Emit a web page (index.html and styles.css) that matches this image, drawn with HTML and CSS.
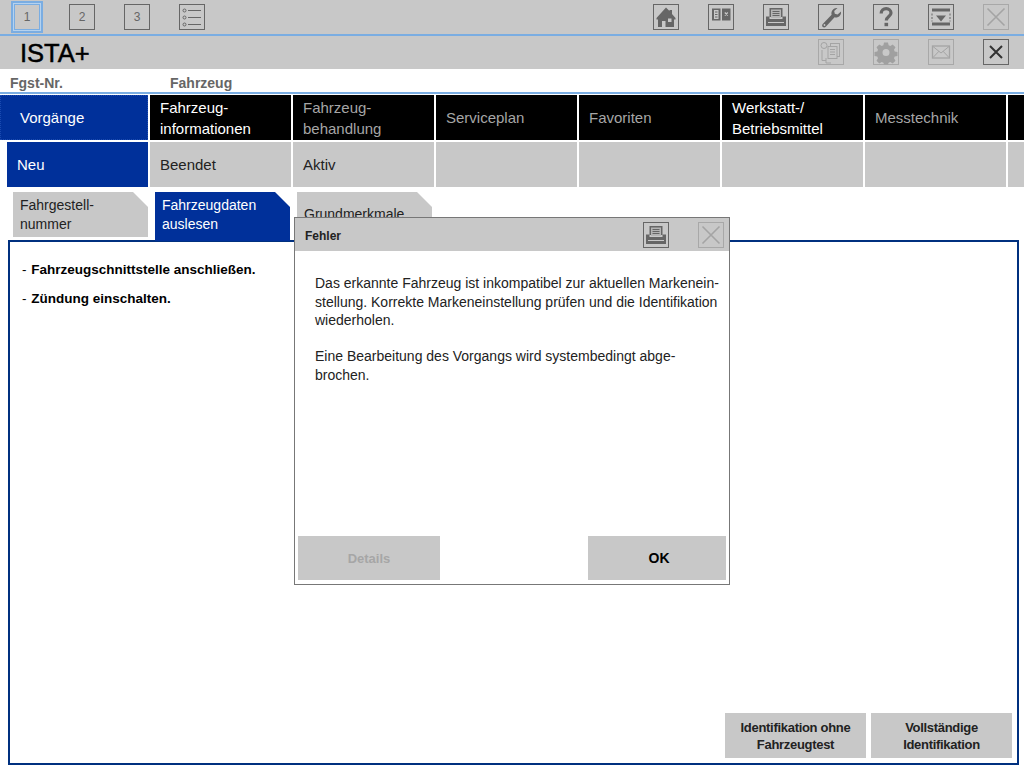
FILE: index.html
```html
<!DOCTYPE html>
<html>
  <head>
    <title>ISTA+</title>
    <link rel="stylesheet" href="styles.css">
  </head>
  <body>
    <div class="toolbar">
      <div class="tool-group">
        <div class="tool tool-current">1</div>
        <div class="tool">2</div>
        <div class="tool">3</div>
        <div class="tool">
          <svg viewBox="0 0 26 26"><g fill="none" stroke="#666"><circle cx="5.500" cy="6.500" r="1.500"/><circle cx="5.500" cy="13.500" r="1.500"/><circle cx="5.500" cy="20.500" r="1.500"/><path d="M9 6.500h13M9 13.500h13M9 20.500h13"/></g></svg>
        </div>
      </div>
      <div class="tool-group">
        <div class="tool">
          <svg viewBox="0 0 26 26"><path fill="#666" d="M13 3.500 3.500 14v1.500H5V23h4v-6h3.500v6H21v-7.500h1.500V14L19 10V6h-2.500v1z"/><rect x="15" y="14.500" width="3.500" height="3.500" fill="#c8c8c8"/></svg>
        </div>
        <div class="tool">
          <svg viewBox="0 0 26 26"><rect x="4" y="4.500" width="8.500" height="12" fill="#666"/><rect x="14" y="4.500" width="8.500" height="12" fill="#666"/><rect x="6" y="6" width="4.500" height="9" fill="#c8c8c8"/><path d="M7 8h2.500M7 10.500h2.500M7 13h2.500" stroke="#666"/><path d="m16.800 8.500 3 3m0-3-3 3" stroke="#c8c8c8" stroke-width="1.200"/></svg>
        </div>
        <div class="tool">
          <svg viewBox="0 0 26 26"><use href="#print-icon"/></svg>
        </div>
        <div class="tool">
          <svg viewBox="0 0 26 26"><path fill="#666" d="M23 7.500c.4 2.600-1 5-3.500 5.800-1 .3-2 .3-2.900 0L8 22.500c-1 1-2.300 1.200-3.200.4-1-1-.8-2.200.2-3.200l8.600-9c-.3-1-.3-2 0-3C14.500 5 17 3.600 19.500 4l-3.300 3 .6 2.700 2.800.8z"/><circle cx="6.500" cy="21" r=".9" fill="#c8c8c8"/></svg>
        </div>
        <div class="tool">
          <svg viewBox="0 0 26 26"><path fill="none" stroke="#666" stroke-width="3.200" d="M8.200 9.500c0-3 2.200-4.800 5-4.800s4.800 1.700 4.800 4.200c0 3.600-4.700 3.600-4.700 7.600"/><rect x="11.500" y="18.800" width="3.600" height="3.400" fill="#666"/></svg>
        </div>
        <div class="tool">
          <svg viewBox="0 0 26 26"><rect x="4" y="4.500" width="18" height="3" fill="#666"/><rect x="4" y="18.500" width="18" height="3" fill="#666"/><path d="M4 9.500v8M22 9.500v8" stroke="#666" stroke-dasharray="2 1.500"/><path fill="#666" d="M8 11.500h10l-5 6z"/></svg>
        </div>
        <div class="tool tool-off">
          <svg viewBox="0 0 26 26"><path fill="none" stroke="#a4a4a4" stroke-width="1.600" d="m4.500 4.500 17 17m0-17-17 17"/></svg>
        </div>
      </div>
    </div>

    <div class="titlebar">
      <h1>ISTA+</h1>
      <div class="tool-group">
        <div class="tool tool-off">
          <svg viewBox="0 0 26 26"><g fill="none" stroke="#a4a4a4"><circle cx="6" cy="6.500" r="3"/><rect x="12.500" y="4.500" width="9" height="13"/><rect x="10" y="7.500" width="9" height="12" fill="#c8c8c8"/><path d="M12 10.500h5M12 13h5M12 15.500h5M4 11v10.500h4M8 19v5h5"/></g></svg>
        </div>
        <div class="tool tool-off">
          <svg viewBox="0 0 26 26"><path fill="#a0a0a0" fill-rule="evenodd" d="M11 3.500h4l.6 2.800 1.700.7 2.400-1.500 2.800 2.800-1.500 2.400.7 1.700 2.800.6v4l-2.800.6-.7 1.700 1.500 2.400-2.800 2.800-2.400-1.500-1.700.7-.6 1.800h-4l-.6-1.800-1.700-.7-2.400 1.500-2.800-2.800 1.500-2.400-.7-1.700-2.800-.6v-4l2.800-.6.7-1.700-1.500-2.400 2.800-2.800 2.400 1.500 1.700-.7zM13 10a3.500 3.500 0 1 0 0 7 3.500 3.500 0 0 0 0-7z"/></svg>
        </div>
        <div class="tool tool-off">
          <svg viewBox="0 0 26 26"><rect x="4.500" y="7" width="17" height="12" fill="none" stroke="#a4a4a4" stroke-width="1.300"/><path fill="none" stroke="#a4a4a4" d="m5 7.500 8 6.500 8-6.500M5 18.500l6-6.300M21 18.500l-6-6.300"/></svg>
        </div>
        <div class="tool">
          <svg viewBox="0 0 26 26"><path fill="none" stroke="#333" stroke-width="2" d="m7 7 12 12m0-12L7 19"/></svg>
        </div>
      </div>
    </div>

    <div class="vehicle-bar">
      <span class="vehicle-vin">Fgst-Nr.</span>
      <span>Fahrzeug</span>
    </div>

    <div class="nav">
      <div class="nav-item nav-active">Vorgänge</div>
      <div class="nav-item nav-white">Fahrzeug-<br>informationen</div>
      <div class="nav-item">Fahrzeug-<br>behandlung</div>
      <div class="nav-item">Serviceplan</div>
      <div class="nav-item">Favoriten</div>
      <div class="nav-item nav-white">Werkstatt-/<br>Betriebsmittel</div>
      <div class="nav-item">Messtechnik</div>
      <div class="nav-item nav-rest"></div>
    </div>

    <div class="subnav">
      <div class="sub-item sub-active">Neu</div>
      <div class="sub-item">Beendet</div>
      <div class="sub-item">Aktiv</div>
      <div class="sub-item"></div>
      <div class="sub-item"></div>
      <div class="sub-item"></div>
      <div class="sub-item"></div>
      <div class="sub-item sub-rest"></div>
    </div>

    <div class="tabs">
      <div class="tab">Fahrgestell-<br>nummer</div>
      <div class="tab tab-active">Fahrzeugdaten<br>auslesen</div>
      <div class="tab">Grundmerkmale</div>
    </div>

    <div class="content">
      <p class="hint">- <b>Fahrzeugschnittstelle anschließen.</b></p>
      <p class="hint">- <b>Zündung einschalten.</b></p>
      <div class="content-actions">
        <button class="action">Identifikation ohne<br>Fahrzeugtest</button>
        <button class="action">Vollständige<br>Identifikation</button>
      </div>
    </div>

    <div class="dialog">
      <div class="dialog-head">
        <span class="dialog-title">Fehler</span>
        <div class="tool">
          <svg viewBox="0 0 26 26"><use href="#print-icon"/></svg>
        </div>
        <div class="tool tool-off">
          <svg viewBox="0 0 26 26"><path fill="none" stroke="#a4a4a4" stroke-width="1.600" d="m4.500 4.500 17 17m0-17-17 17"/></svg>
        </div>
      </div>
      <div class="dialog-body">
        <p>Das erkannte Fahrzeug ist inkompatibel zur aktuellen Markenein-<br>stellung. Korrekte Markeneinstellung prüfen und die Identifikation<br>wiederholen.</p>
        <p>Eine Bearbeitung des Vorgangs wird systembedingt abge-<br>brochen.</p>
      </div>
      <div class="dialog-foot">
        <button class="dialog-btn dialog-details">Details</button>
        <button class="dialog-btn dialog-ok">OK</button>
      </div>
    </div>

    <svg class="defs" width="0" height="0">
      <symbol id="print-icon" viewBox="0 0 26 26">
        <path fill="#666" d="M6.500 4h13v9h-13z"/>
        <path fill="#b4b4b4" d="M8 5.500h10V14H8z"/>
        <path stroke="#666" d="M9.500 7.500h7M9.500 9.500h7M9.500 11.500h7"/>
        <path fill="#666" d="M3 12.500h3.500V15h13v-2.500H23V22H3z"/>
        <path stroke="#c8c8c8" d="M5 18.500h16"/>
      </symbol>
    </svg>
  </body>
</html>
```

FILE: styles.css
```css
* {
  box-sizing: border-box;
}

html,
body {
  height: 768px;
}

body {
  position: relative;
  width: 1024px;
  margin: 0;
  overflow: hidden;
  background: #fff;
  font-family: "Liberation Sans", Arial, sans-serif;
  color: #000;
}

.defs {
  position: absolute;
}

.toolbar,
.titlebar {
  display: flex;
  justify-content: space-between;
  align-items: center;
  background: #c8c8c8;
  padding: 0 15px 0 13px;
}

.toolbar {
  height: 36px;
  padding-left: 14px;
  border-bottom: 2px solid #7aade2;
}

.titlebar {
  height: 33px;
  padding-left: 20px;
  padding-bottom: 1px;
}

.titlebar h1 {
  margin: 2px 0 0 0;
  font-size: 25.500px;
  font-weight: normal;
  -webkit-text-stroke: 0.5px #000;
}

.tool-group {
  display: flex;
  gap: 29px;
}

.titlebar .tool-group {
  margin-right: 0;
}

.tool {
  display: flex;
  align-items: center;
  justify-content: center;
  width: 26px;
  height: 26px;
  border: 1px solid #666;
  font-size: 12px;
  color: #666;
}

.tool svg {
  width: 26px;
  height: 26px;
  flex-shrink: 0;
}

.tool-off {
  border-color: #a8a8a8;
}

.tool-current {
  border-color: #7aade2;
  box-shadow: 0 0 0 1px #b5d2ef, 0 0 0 3px #7aade2;
}

.vehicle-bar {
  display: flex;
  align-items: flex-end;
  height: 25px;
  padding: 0 0 1px 10px;
  border-bottom: 2px solid #7aade2;
  font-size: 14px;
  font-weight: bold;
  color: #666;
}

.vehicle-vin {
  width: 160px;
}

.nav,
.subnav {
  display: flex;
  gap: 2px;
}

.nav {
  height: 45px;
  margin-top: 1px;
}

.nav-item {
  display: flex;
  align-items: center;
  width: 141px;
  padding-left: 10px;
  background: #000;
  font-size: 15px;
  line-height: 21px;
  color: #a6a6a6;
}

.nav-white {
  color: #fff;
}

.nav-active {
  width: 148px;
  padding-left: 19px;
  background: #00309a;
  border: 1px dotted #1a4ab0;
  color: #fff;
}

.nav-rest {
  width: 16px;
}

.subnav {
  height: 45px;
  margin-top: 2px;
  padding-left: 7px;
}

.sub-item {
  display: flex;
  align-items: center;
  width: 141px;
  padding-left: 10px;
  background: #c8c8c8;
  font-size: 15px;
  color: #222;
}

.sub-active {
  background: #00309a;
  color: #fff;
}

.sub-rest {
  width: 16px;
}

.tabs {
  display: flex;
  gap: 7px;
  height: 49px;
  margin-top: 5px;
  padding-left: 13px;
}

.tab {
  display: flex;
  align-items: center;
  width: 135px;
  height: 45px;
  padding-left: 7px;
  background: #c8c8c8;
  clip-path: polygon(0 0, 120px 0, 100% 15px, 100% 100%, 0 100%);
  font-size: 14px;
  line-height: 19px;
  color: #222;
}

.tab-active {
  height: 49px;
  background: #00309a;
  padding-bottom: 4px;
  color: #fff;
}

.content {
  display: flex;
  flex-direction: column;
  height: 525px;
  margin: -1px 5px 0 8px;
  padding: 19px 5px 5px 12px;
  border: 2px solid #00307f;
}

.hint {
  margin: 0 0 11px 0;
  font-size: 13.500px;
  line-height: 18px;
}

.hint b {
  margin-left: 1px;
}

.content-actions {
  display: flex;
  justify-content: flex-end;
  gap: 5px;
  margin-top: auto;
}

.action {
  width: 141px;
  height: 45px;
  padding: 0;
  border: none;
  background: #c8c8c8;
  font-family: inherit;
  font-size: 13px;
  font-weight: bold;
  letter-spacing: -0.3px;
  line-height: 17px;
  color: #222;
}

.dialog {
  position: absolute;
  left: 294px;
  top: 217px;
  display: flex;
  flex-direction: column;
  width: 436px;
  height: 368px;
  background: #fff;
  border: 1px solid #777;
}

.dialog-head {
  display: flex;
  align-items: center;
  gap: 29px;
  height: 33px;
  padding: 0 5px 0 10px;
  background: #c8c8c8;
}

.dialog-title {
  flex: 1;
  padding-top: 3px;
  font-size: 12px;
  font-weight: bold;
  color: #222;
}

.dialog-body {
  flex: 1;
  padding: 23px 10px 0 20px;
  font-size: 14px;
  line-height: 18.500px;
  color: #222;
}

.dialog-body p {
  margin: 0 0 17.500px 0;
}

.dialog-foot {
  display: flex;
  justify-content: space-between;
  padding: 0 3px 4px 3px;
}

.dialog-btn {
  height: 44px;
  padding: 0;
  border: none;
  background: #c8c8c8;
  font-family: inherit;
  font-size: 13px;
  font-weight: bold;
}

.dialog-details {
  width: 142px;
  color: #a6a6a6;
}

.dialog-ok {
  width: 138px;
  padding-left: 4px;
  font-size: 14px;
  color: #000;
}
```
